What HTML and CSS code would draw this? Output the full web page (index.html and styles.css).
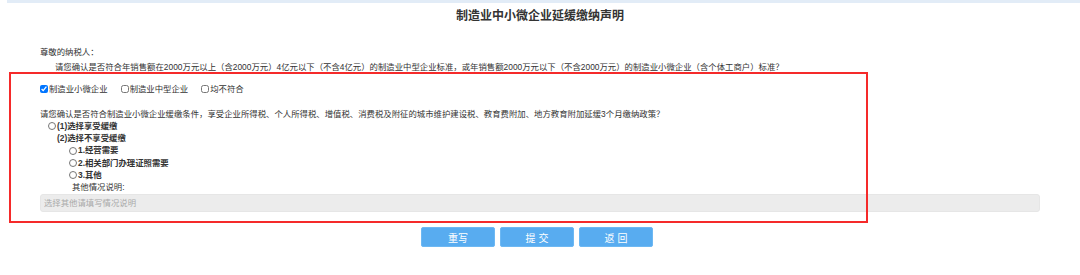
FILE: index.html
```html
<!DOCTYPE html>
<html lang="zh-CN">
<head>
    <meta charset="UTF-8">
    <meta name="viewport" content="width=device-width, initial-scale=1.0">
    <title>制造业中小微企业延缓缴纳声明</title>
    <link rel="stylesheet" href="styles.css">
</head>
<body>

<div class="topbar"></div>

<div class="page">
    <h1>制造业中小微企业延缓缴纳声明</h1>

    <p class="greeting">尊敬的纳税人：</p>
    <p class="intro">请您确认是否符合年销售额在2000万元以上（含2000万元）4亿元以下（不含4亿元）的制造业中型企业标准，或年销售额2000万元以下（不含2000万元）的制造业小微企业（含个体工商户）标准？</p>

    <form id="delay-form">
        <div class="check-row">
            <label class="check"><input type="checkbox" name="type" value="small" checked>制造业小微企业</label>
            <label class="check"><input type="checkbox" name="type" value="medium">制造业中型企业</label>
            <label class="check"><input type="checkbox" name="type" value="none">均不符合</label>
        </div>

        <p class="question">请您确认是否符合制造业小微企业缓缴条件，享受企业所得税、个人所得税、增值税、消费税及附征的城市维护建设税、教育费附加、地方教育附加延缓3个月缴纳政策？</p>

        <div class="options">
            <label class="opt lvl1"><input type="radio" name="choice" value="1">(1)选择享受缓缴</label>
            <div class="opt lvl1b">(2)选择不享受缓缴</div>
            <label class="opt lvl2"><input type="radio" name="reason" value="1">1.经营需要</label>
            <label class="opt lvl2"><input type="radio" name="reason" value="2">2.相关部门办理证照需要</label>
            <label class="opt lvl2"><input type="radio" name="reason" value="3">3.其他</label>
            <div class="note-label">其他情况说明:</div>
        </div>

        <input type="text" class="note" placeholder="选择其他请填写情况说明">

        <div class="buttons">
            <button type="reset">重写</button>
            <button type="submit">提 交</button>
            <button type="button">返 回</button>
        </div>
    </form>
</div>

<!-- 标注框 -->
<div class="mark"></div>

</body>
</html>
```

FILE: styles.css
```css
body {
    margin: 0;
    padding: 0;
    font-family: "Liberation Sans", "Noto Sans CJK SC", sans-serif;
    font-size: 8.4px;
    color: #333;
    background-color: #fff;
    position: relative;
}

.topbar {
    margin-left: 7px;
    height: 3px;
    background-color: #e2ecf7;
}

.page {
    padding: 0 40px;
}

h1 {
    margin: 6px 0 0;
    font-size: 12px;
    line-height: 14px;
    text-align: center;
    color: #333;
}

.greeting,
.intro {
    margin: 0;
    line-height: 15px;
}

.greeting {
    margin-top: 22px;
}

.intro {
    padding-left: 15px;
}

.check-row {
    display: flex;
    margin-top: 8px;
    line-height: 12px;
}

.check {
    display: flex;
    align-items: center;
    margin-right: 13px;
}

.check input,
.opt input {
    width: 8px;
    height: 8px;
    margin: 0 1px 0 0;
}

.question {
    margin: 13px 0 0;
    line-height: 12px;
}

.options {
    display: flex;
    flex-direction: column;
    align-items: flex-start;
}

.opt,
.note-label {
    display: flex;
    align-items: center;
    line-height: 12.2px;
    font-weight: bold;
}

.lvl1 {
    padding-left: 8px;
}

.lvl1b {
    padding-left: 17px;
}

.lvl2 {
    padding-left: 29px;
}

.note-label {
    padding-left: 32px;
    font-weight: normal;
}

.note {
    display: block;
    width: 100%;
    height: 18px;
    margin: 1px 0 0;
    padding: 0 3px;
    box-sizing: border-box;
    border: 1px solid #e6e6e6;
    border-radius: 3px;
    background-color: #ececec;
    font-family: inherit;
    font-size: 8.4px;
    color: #333;
}

.note::placeholder {
    color: #a9a9a9;
}

.buttons {
    display: flex;
    justify-content: center;
    gap: 5px;
    margin-top: 15px;
    padding-right: 6px;
}

.buttons button {
    width: 74px;
    height: 20px;
    padding: 0;
    border: 1px solid #6db8f3;
    border-radius: 2px;
    background-color: #58acf0;
    color: #fff;
    font-family: inherit;
    font-size: 10px;
    cursor: pointer;
}

.mark {
    position: absolute;
    left: 9px;
    top: 72px;
    width: 859px;
    height: 151px;
    box-sizing: border-box;
    border: 2px solid #f52a2a;
    pointer-events: none;
}
```
